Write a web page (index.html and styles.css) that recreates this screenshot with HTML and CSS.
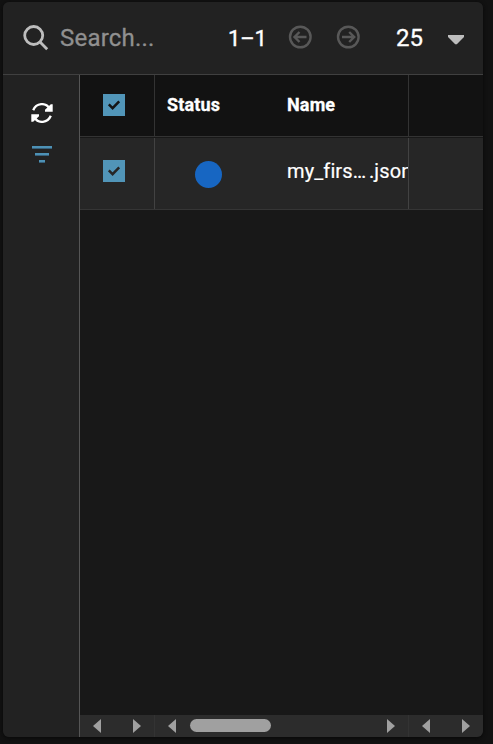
FILE: index.html
```html
<!DOCTYPE html>
<html lang="en">
<head>
<meta charset="utf-8">
<title>Files</title>
<link rel="stylesheet" href="styles.css">
</head>
<body>
<main class="panel">
  <header class="toolbar">
    <svg class="search-icon" width="26" height="26" viewBox="0 0 26 26"><circle cx="10.7" cy="10.5" r="9" /><path d="M17 17 24.2 24.2"/></svg>
    <span class="search">Search...</span>
    <span class="range">1–1</span>
    <svg class="page-icon" width="24" height="24" viewBox="0 0 24 24"><circle cx="12.3" cy="12" r="10.3"/><path d="M18.5 12H7M11.5 7 6.5 12l5 5"/></svg>
    <svg class="page-icon next" width="24" height="24" viewBox="0 0 24 24"><circle cx="12.3" cy="12" r="10.3"/><path d="M6 12h12M13.2 7l5 5-5 5"/></svg>
    <span class="size">25</span>
    <svg class="caret" width="16" height="10" viewBox="0 0 16 10"><path d="M0 0H16V2L8.8 9.2H7.2L0 2Z"/></svg>
  </header>
  <div class="body">
    <aside class="sidebar">
      <svg class="refresh" width="22" height="20" viewBox="0 0 22 20"><path class="arc" d="M2.2 7.2C5.2-.2 14.8-.8 18.4 5.3M19.8 12.8C16.8 20.2 7.2 20.8 3.6 14.7"/><path class="tip" d="M21.7 1.2V8.7H14V6.8L19.8 1.2ZM.3 18.8V11.3H8V13.2L2.2 18.8Z"/></svg>
      <div class="filter"><i></i><i></i><i></i></div>
    </aside>
    <section class="table">
      <div class="row head">
        <div class="cell check"><span class="box"><svg width="22" height="22" viewBox="0 0 22 22"><path d="M5.8 10.4 9.6 14.2 16.2 7.3"/></svg></span></div>
        <div class="cell data"><span>Status</span><span>Name</span></div>
        <div class="cell"></div>
      </div>
      <div class="row item">
        <div class="cell check"><span class="box"><svg width="22" height="22" viewBox="0 0 22 22"><path d="M5.8 10.4 9.6 14.2 16.2 7.3"/></svg></span></div>
        <div class="cell data"><span class="dot"></span><span class="name"><span class="stem">my_firs…</span><span>.json</span></span></div>
        <div class="cell"></div>
      </div>
      <div class="empty"></div>
      <div class="row scroll">
        <div class="cell bar"><i class="left"></i><i class="right"></i></div>
        <div class="cell bar"><i class="left"></i><b class="thumb"></b><i class="right"></i></div>
        <div class="cell bar"><i class="left"></i><i class="right"></i></div>
      </div>
    </section>
  </div>
</main>
</body>
</html>
```
FILE: styles.css
```css
* { box-sizing: border-box; }
body { margin: 0; padding: 2px 10px 7px 3px; height: 744px; background: #121212; color: #fff; font-family: Roboto, sans-serif; overflow: hidden; }
svg { display: block; flex: none; fill: none; }
.panel { width: 480px; height: 735px; display: flex; flex-direction: column; background: #181818; border-radius: 6px; overflow: hidden; box-shadow: 0 1px 4px #080808; }
.toolbar { height: 73px; flex: none; display: flex; align-items: center; padding: 0 19px 0 20px; background: #222; border-bottom: 1px solid #404040; white-space: nowrap; }
.search-icon { stroke: #bdbdbd; stroke-width: 2.8; }
.search { width: 168px; margin-left: 10px; font-size: 24px; letter-spacing: .2px; color: #909090; padding-left: 1px; -webkit-text-stroke: .3px; }
.range { width: 61px; padding-left: 1px; font-size: 22px; letter-spacing: -.2px; -webkit-text-stroke: .4px; }
.page-icon { stroke: #585858; stroke-width: 2.4; margin-top: -2px; }
.next { margin-left: 24px; }
.size { width: 52px; margin-left: 36px; font-size: 24px; -webkit-text-stroke: .3px; }
.caret { fill: #bdbdbd; margin-top: 4px; }
.body { flex: 1; min-height: 0; display: flex; }
.sidebar { width: 77px; flex: none; display: flex; flex-direction: column; align-items: center; padding: 28px 0 0 2px; background: #222; border-right: 1px solid #555; }
.arc { stroke: #fff; stroke-width: 2.3; }
.tip { fill: #fff; }
.filter { display: flex; flex-direction: column; align-items: center; gap: 5px; margin-top: 23px; }
.filter i { height: 2px; width: 20px; background: #4d91b5; box-shadow: 0 1px #37607a; }
.filter i:nth-child(2) { width: 14px; }
.filter i:nth-child(3) { width: 6px; }
.table { flex: 1; min-width: 0; display: flex; flex-direction: column; }
.row { display: grid; grid-template-columns: 75px 254px 74px; flex: none; }
.cell { border-right: 1px solid #333; min-width: 0; overflow: hidden; }
.cell:last-child { border-right: 0; }
.head { height: 62px; background: #121212; border-bottom: 1px solid #333; font-size: 18px; font-weight: 700; letter-spacing: .15px; -webkit-text-stroke: .3px; }
.item { height: 72px; margin-top: 1px; background: #262626; border-bottom: 1px solid #353535; font-size: 20px; }
.item .cell { border-color: #424242; }
.check { display: flex; padding: 19px 0 0 23.4px; }
.item .check { padding: 22px 0 0 23px; }
.box { width: 22px; height: 22px; background: #5195b8; }
.box path { stroke: #151515; stroke-width: 2.5; }
.item .box path { stroke: #262626; }
.data { display: grid; grid-template-columns: 120px 1fr; padding-left: 12px; }
.head .data { padding-top: 19px; }
.dot { width: 27px; height: 27px; margin: 22.5px 0 0 28.3px; border-radius: 50%; background: #1766c2; }
.name { display: flex; padding-top: 21px; white-space: nowrap; letter-spacing: .1px; -webkit-text-stroke: .2px; }
.stem { width: 82px; flex: none; }
.empty { flex: 1; }
.scroll { height: 22px; background: #2c2c2c; }
.bar { display: flex; align-items: center; justify-content: space-between; padding: 0 13px 1px; }
.left, .right { border: solid transparent; border-width: 7.5px 0; }
.left { border-right: 8px solid #a0a0a0; }
.right { border-left: 8px solid #a0a0a0; }
.thumb { width: 81px; height: 13px; margin: 0 auto 0 14px; border-radius: 7px; background: #a0a0a0; }
```
